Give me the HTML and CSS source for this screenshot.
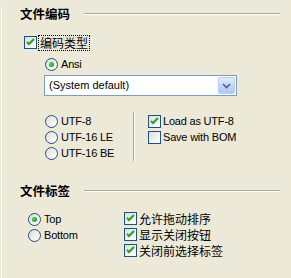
FILE: index.html
```html
<!DOCTYPE html>
<html>
<head>
<meta charset="utf-8">
<link rel="stylesheet" href="styles.css">
</head>
<body>
<div class="page">
  <div class="hdr hdr1"><span class="hdr-text">文件编码</span><i class="rule"></i></div>

  <div class="row group-row">
    <span class="chk on"><svg viewBox="0 0 11 11" width="11" height="11"><path d="M2 5 L4 7 L9 2" fill="none" stroke="#21a121" stroke-width="2"/></svg></span>
    <span class="cjk focus">编码类型</span>
  </div>

  <div class="row ansi-row">
    <span class="radio on"></span><span class="lat">Ansi</span>
  </div>

  <div class="select">
    <span class="select-text">(System default)</span>
    <span class="select-btn"><svg viewBox="0 0 9 6" width="9" height="6"><path d="M1 1 L4.5 4.5 L8 1" fill="none" stroke="#4d6185" stroke-width="1.6"/></svg></span>
  </div>

  <div class="enc-area">
    <div class="enc-left">
      <div class="row"><span class="radio"></span><span class="lat">UTF-8</span></div>
      <div class="row"><span class="radio"></span><span class="lat">UTF-16 LE</span></div>
      <div class="row"><span class="radio"></span><span class="lat">UTF-16 BE</span></div>
    </div>
    <div class="enc-right">
      <div class="row"><span class="chk on"><svg viewBox="0 0 11 11" width="11" height="11"><path d="M2 5 L4 7 L9 2" fill="none" stroke="#21a121" stroke-width="2"/></svg></span><span class="lat c">Load as UTF-8</span></div>
      <div class="row"><span class="chk"></span><span class="lat c">Save with BOM</span></div>
    </div>
  </div>

  <div class="hdr hdr2"><span class="hdr-text">文件标签</span><i class="rule"></i></div>

  <div class="tab-area">
    <div class="tab-left">
      <div class="row"><span class="radio on"></span><span class="lat">Top</span></div>
      <div class="row"><span class="radio"></span><span class="lat">Bottom</span></div>
    </div>
    <div class="tab-right">
      <div class="row"><span class="chk on"><svg viewBox="0 0 11 11" width="11" height="11"><path d="M2 5 L4 7 L9 2" fill="none" stroke="#21a121" stroke-width="2"/></svg></span><span class="cjk c">允许拖动排序</span></div>
      <div class="row"><span class="chk on"><svg viewBox="0 0 11 11" width="11" height="11"><path d="M2 5 L4 7 L9 2" fill="none" stroke="#21a121" stroke-width="2"/></svg></span><span class="cjk c">显示关闭按钮</span></div>
      <div class="row"><span class="chk on"><svg viewBox="0 0 11 11" width="11" height="11"><path d="M2 5 L4 7 L9 2" fill="none" stroke="#21a121" stroke-width="2"/></svg></span><span class="cjk c">关闭前选择标签</span></div>
    </div>
  </div>
</div>
</body>
</html>
```

FILE: styles.css
```css
html, body {
  margin: 0;
  padding: 0;
  background: #ece9d8;
}
body {
  width: 291px;
  height: 278px;
  overflow: hidden;
  font-family: "Liberation Sans", Arial, sans-serif;
  font-size: 11px;
  color: #000;
}
.page {
  box-sizing: border-box;
  height: 278px;
  margin-left: 1px;
  border-left: 1px solid #fff;
  margin-left: 1px;
  padding-left: 0;
}
.hdr {
  display: flex;
  align-items: center;
  height: 14px;
  padding-left: 18px;
  padding-right: 11px;
}
.hdr1 { margin-top: 7px; }
.hdr2 { margin-top: 23px; }
.hdr-text {
  font-family: "Noto Sans CJK SC", sans-serif;
  font-weight: 700;
  font-size: 12.5px;
  line-height: 14px;
  letter-spacing: 0;
}
.rule {
  flex: 1;
  height: 0;
  margin-left: 14px;
  border-top: 1px solid #aca899;
  border-bottom: 1px solid #fff;
}
.row {
  display: flex;
  align-items: center;
  height: 15px;
}
.lat {
  font-family: "Liberation Sans", Arial, sans-serif;
  font-size: 11px;
  line-height: 13px;
  margin-left: 3px;
  letter-spacing: -0.2px;
}
.cjk {
  font-family: "Noto Sans CJK SC", sans-serif;
  font-size: 12px;
  line-height: 14px;
  margin-left: 3px;
}
.c { margin-left: 2px; }
.chk {
  box-sizing: border-box;
  width: 13px;
  height: 13px;
  flex: none;
  border: 1px solid #1c5180;
  background: linear-gradient(135deg, #dcdcd7 0%, #f2f2ef 60%, #ffffff 100%);
  display: flex;
  align-items: center;
  justify-content: center;
}
.radio {
  box-sizing: border-box;
  width: 13px;
  height: 13px;
  flex: none;
  border-radius: 50%;
  border: 1px solid #1c5180;
  background: linear-gradient(135deg, #dcdcd7 0%, #f0f0ec 55%, #ffffff 100%);
  position: relative;
}
.radio.on::after {
  content: "";
  position: absolute;
  left: 3px;
  top: 3px;
  width: 5px;
  height: 5px;
  border-radius: 50%;
  background: radial-gradient(circle at 40% 40%, #55d451 0%, #21a121 70%, #1a8a1a 100%);
}
.group-row {
  margin-top: 14px;
  padding-left: 22px;
}
.focus {
  outline: 1px dotted #000;
  outline-offset: 0;
  padding: 0 1px;
  margin-left: 2px;
}
.ansi-row {
  margin-top: 7px;
  padding-left: 43px;
}
.select {
  box-sizing: border-box;
  margin-top: 3px;
  margin-left: 42px;
  width: 193px;
  height: 21px;
  border: 1px solid #7f9db9;
  background: #fff;
  display: flex;
  align-items: center;
  padding: 1px;
}
.select-text {
  flex: 1;
  padding-left: 3px;
  line-height: 17px;
}
.select-btn {
  box-sizing: border-box;
  width: 17px;
  height: 17px;
  border: 1px solid #b9cdf5;
  border-radius: 2px;
  background: linear-gradient(#e3ecfe, #c0d2f9 60%, #b0c6f6);
  display: flex;
  align-items: center;
  justify-content: center;
}
.enc-area {
  display: flex;
  margin-top: 16px;
  height: 49px;
}
.enc-left {
  width: 88px;
  padding-left: 43px;
  padding-top: 2px;
  display: flex;
  flex-direction: column;
  gap: 1px;
}
.enc-right {
  border-left: 1px solid #aca899;
  box-shadow: 1px 0 0 #fff inset;
  padding-left: 14px;
  padding-top: 2px;
  display: flex;
  flex-direction: column;
  gap: 1px;
}
.tab-area {
  display: flex;
  margin-top: 13px;
}
.tab-left {
  width: 96px;
  padding-left: 26px;
  padding-top: 1px;
  display: flex;
  flex-direction: column;
  gap: 1px;
}
.tab-right {
  display: flex;
  flex-direction: column;
  gap: 1px;
}
```
